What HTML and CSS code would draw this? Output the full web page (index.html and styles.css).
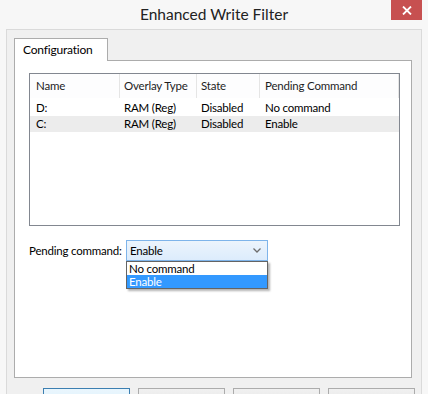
FILE: index.html
```html
<!DOCTYPE html>
<html lang="en">
<head>
    <meta charset="UTF-8">
    <meta name="viewport" content="width=device-width, initial-scale=1.0">
    <title>Enhanced Write Filter</title>
    <link rel="stylesheet" href="styles.css">
</head>
<body>
    <div class="window">
        <div class="titlebar">
            <span></span>
            <h1 class="title">Enhanced Write Filter</h1>
            <button class="close" aria-label="Close">
                <svg width="10" height="9" viewBox="0 0 10 9">
                    <path d="M1 0.5 L9 8.5 M9 0.5 L1 8.5" stroke="#fff" stroke-width="1.8" fill="none"/>
                </svg>
            </button>
        </div>

        <div class="client">
            <div class="tabs">
                <div class="tab">Configuration</div>
            </div>
            <div class="tab-panel">
                <div class="listview">
                    <div class="lv-row lv-head">
                        <div class="cell">Name</div>
                        <div class="cell">Overlay Type</div>
                        <div class="cell">State</div>
                        <div class="cell">Pending Command</div>
                    </div>
                    <div class="lv-body">
                        <div class="lv-row">
                            <div class="cell">D:</div>
                            <div class="cell">RAM (Reg)</div>
                            <div class="cell">Disabled</div>
                            <div class="cell">No command</div>
                        </div>
                        <div class="lv-row selected">
                            <div class="cell">C:</div>
                            <div class="cell">RAM (Reg)</div>
                            <div class="cell">Disabled</div>
                            <div class="cell">Enable</div>
                        </div>
                    </div>
                </div>

                <div class="pending">
                    <label for="pendingCombo">Pending command:</label>
                    <div class="combo" id="pendingCombo">
                        <div class="combo-box">
                            <span>Enable</span>
                            <svg width="8" height="5" viewBox="0 0 8 5">
                                <path d="M0.5 0.5 L4 4 L7.5 0.5" stroke="#6d6d6d" stroke-width="1.3" fill="none"/>
                            </svg>
                        </div>
                        <ul class="combo-list">
                            <li>No command</li>
                            <li class="active">Enable</li>
                        </ul>
                    </div>
                </div>
            </div>

            <!-- button captions fall below the visible area -->
            <div class="buttons">
                <button class="btn default" aria-label="OK"></button>
                <button class="btn" aria-label="Cancel"></button>
                <button class="btn" aria-label="Apply"></button>
                <button class="btn" aria-label="Help"></button>
            </div>
        </div>
    </div>
</body>
</html>
```

FILE: styles.css
```css
body {
    margin: 0;
    padding: 0;
    background-color: #f7f7f7;
    font-family: Lato, "Noto Sans", sans-serif;
    font-size: 11.5px;
    letter-spacing: -0.2px;
    color: #000;
    overflow: hidden;
}
.window {
    width: 428px;
    height: 394px;
    overflow: hidden;
}
.titlebar {
    display: grid;
    grid-template-columns: 1fr auto 1fr;
    height: 29px;
}
.title {
    margin: 0;
    font-size: 15.5px;
    font-weight: normal;
    letter-spacing: 0;
    line-height: 28px;
    color: #222;
}
.close {
    justify-self: end;
    align-self: start;
    width: 31px;
    height: 20px;
    margin-right: 6px;
    padding: 0;
    border: none;
    background-color: #c75050;
    display: flex;
    align-items: center;
    justify-content: center;
}
.client {
    margin-left: 6px;
    width: 416px;
    height: 400px;
    box-sizing: border-box;
    border: 1px solid #dadada;
    background-color: #f0f0f0;
}
.tabs {
    display: flex;
    padding-left: 7px;
    margin-top: 8px;
}
.tab {
    position: relative;
    z-index: 1;
    width: 94px;
    height: 23px;
    box-sizing: border-box;
    margin-bottom: -1px;
    padding: 3px 0 0 8px;
    border: 1px solid #acacac;
    border-bottom: none;
    background: #fff;
    font-size: 12px;
}
.tab-panel {
    margin-left: 7px;
    width: 398px;
    height: 318px;
    box-sizing: border-box;
    border: 1px solid #acacac;
    background: #fff;
    padding: 12px 0 0 14px;
}
.listview {
    width: 371px;
    height: 153px;
    box-sizing: border-box;
    border: 1px solid #828790;
    background: #fff;
}
.lv-row {
    display: grid;
    grid-template-columns: 90px 77px 63px 139px;
    height: 16px;
    line-height: 16px;
}
.lv-row .cell {
    padding-left: 4px;
    white-space: nowrap;
    overflow: hidden;
}
.lv-row .cell:first-child {
    padding-left: 6px;
}
.lv-row .cell:last-child {
    padding-left: 5px;
}
.lv-head {
    height: 24px;
    line-height: 24px;
    color: #1e1e1e;
    background: #fdfdfe;
}
.lv-head .cell {
    border-right: 1px solid #e5e5e5;
}
.lv-body {
    padding-top: 2px;
}
.lv-row.selected {
    background-color: #ececec;
}
.pending {
    display: flex;
    align-items: center;
    margin-top: 14px;
}
.pending label {
    width: 97px;
    white-space: nowrap;
}
.combo {
    position: relative;
    width: 142px;
}
.combo-box {
    display: flex;
    align-items: center;
    justify-content: space-between;
    height: 21px;
    box-sizing: border-box;
    padding: 0 6px 0 3px;
    border: 1px solid #7eb4ea;
    background: linear-gradient(#ecf4fc, #dcecfc);
}
.combo-list {
    position: absolute;
    top: 100%;
    left: 0;
    width: 142px;
    box-sizing: border-box;
    margin: 0;
    padding: 0;
    list-style: none;
    border: 1px solid #646464;
    background: #fff;
    box-shadow: 2px 2px 2px rgba(0, 0, 0, 0.3);
}
.combo-list li {
    height: 13px;
    line-height: 13px;
    padding-left: 2px;
}
.combo-list li.active {
    background-color: #3399ff;
    color: #fff;
}
.buttons {
    display: flex;
    justify-content: flex-end;
    gap: 8px;
    margin-top: 10px;
    padding-right: 6px;
}
.btn {
    width: 87px;
    height: 23px;
    padding: 0;
    border: 1px solid #acacac;
    background: linear-gradient(#f0f0f0, #e5e5e5);
}
.btn.default {
    border-color: #3c7fb1;
    background: linear-gradient(#eaf6fd, #d9f0fc);
}
```
